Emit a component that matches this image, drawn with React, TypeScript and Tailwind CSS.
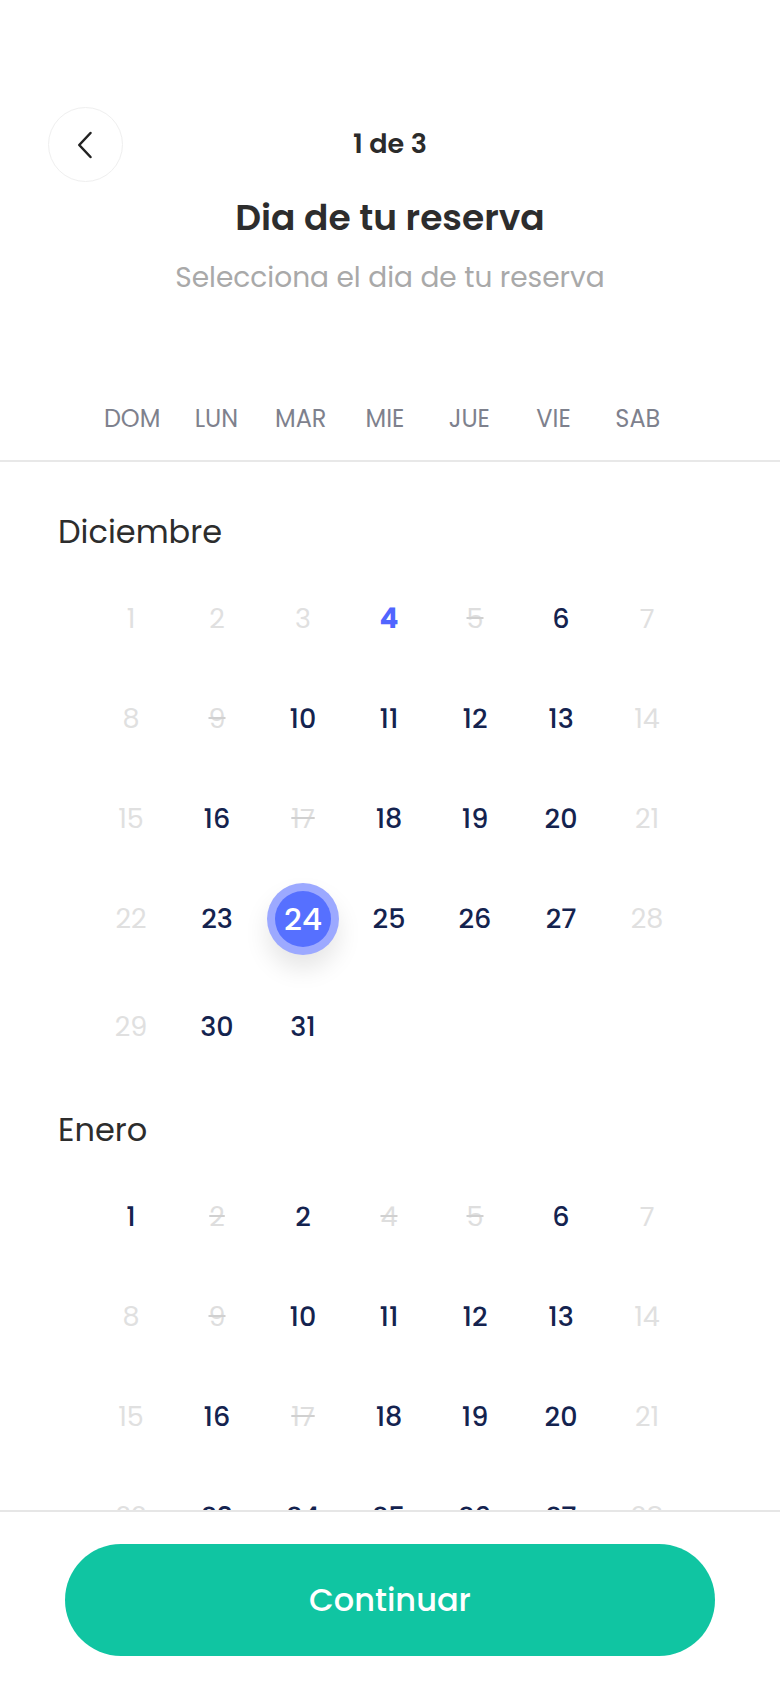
import React from "react";

type Day = { n: number | null; s: "off" | "strike" | "on" | "today" | "sel" };

const off = (n: number): Day => ({ n, s: "off" });
const st = (n: number): Day => ({ n, s: "strike" });
const on = (n: number): Day => ({ n, s: "on" });
const blank: Day = { n: null, s: "off" };

const dec: Day[][] = [
  [off(1), off(2), off(3), { n: 4, s: "today" }, st(5), on(6), off(7)],
  [off(8), st(9), on(10), on(11), on(12), on(13), off(14)],
  [off(15), on(16), st(17), on(18), on(19), on(20), off(21)],
  [off(22), on(23), { n: 24, s: "sel" }, on(25), on(26), on(27), off(28)],
  [off(29), on(30), on(31), blank, blank, blank, blank],
];

const jan: Day[][] = [
  [on(1), st(2), on(2), st(4), st(5), on(6), off(7)],
  [off(8), st(9), on(10), on(11), on(12), on(13), off(14)],
  [off(15), on(16), st(17), on(18), on(19), on(20), off(21)],
  [off(22), on(23), on(24), on(25), on(26), on(27), off(28)],
];

function Cell({ d }: { d: Day }) {
  if (d.n === null) return <div />;
  if (d.s === "sel") {
    return (
      <div className="flex items-center justify-center">
        <div className="flex h-[72px] w-[72px] items-center justify-center rounded-full bg-[#9ca9ff] shadow-[0_14px_24px_rgba(0,0,0,0.10)]">
          <div className="flex h-[56px] w-[56px] items-center justify-center rounded-full bg-[#5670ff] text-[31px] font-medium text-white">
            {d.n}
          </div>
        </div>
      </div>
    );
  }
  const cls =
    d.s === "on"
      ? "text-[#14234f] font-medium text-[27px]"
      : d.s === "today"
      ? "text-[#5065ff] font-bold text-[28px]"
      : d.s === "strike"
      ? "text-[#dedede] text-[27px] line-through decoration-[#d0d0d0]"
      : "text-[#e0e0e0] text-[27px]";
  return (
    <div className="flex items-center justify-center">
      <span className={cls}>{d.n}</span>
    </div>
  );
}

function Month({ name, rows }: { name: string; rows: Day[][] }) {
  return (
    <div>
      <div className="pl-[58px] text-[32px] leading-[44px] text-[#2d2d2d]">{name}</div>
      <div className="mt-[15px] pl-[88px] pr-[90px]">
        {rows.map((r, i) => (
          <div
            key={i}
            className={`grid h-[100px] grid-cols-7 items-center ${
              r.some((d) => d.s === "sel") ? "mb-[8px]" : ""
            }`}
          >
            {r.map((d, j) => (
              <Cell key={j} d={d} />
            ))}
          </div>
        ))}
      </div>
    </div>
  );
}

export default function App() {
  return (
    <div
      className="flex h-[1690px] w-[780px] flex-col overflow-hidden bg-white"
      style={{ fontFamily: "Poppins, Inter, 'Noto Sans', sans-serif" }}
    >
      <div className="pt-[107px]">
        <div className="grid grid-cols-[75px_1fr_75px] items-center px-[48px]">
          <button className="flex h-[75px] w-[75px] items-center justify-center rounded-full border border-[#efefef] bg-white">
            <svg width="36" height="36" viewBox="0 0 24 24" fill="none" stroke="#222" strokeWidth="1.7" strokeLinecap="round" strokeLinejoin="round">
              <path d="M15 4 L7.5 12 L15 20" />
            </svg>
          </button>
          <div className="text-center text-[27px] font-semibold text-[#2b2b2b]">1 de 3</div>
          <div />
        </div>
        <div className="mt-[14px] text-center text-[36px] font-semibold leading-[44px] text-[#2d2d2d]">
          Dia de tu reserva
        </div>
        <div className="mt-[20px] text-center text-[28px] leading-[36px] text-[#a9a9a9]">
          Selecciona el dia de tu reserva
        </div>
      </div>

      <div className="mt-[107px] grid grid-cols-7 pl-[90px] pr-[100px] text-center text-[24px] leading-[32px] text-[#7e818d]">
        {["DOM", "LUN", "MAR", "MIE", "JUE", "VIE", "SAB"].map((d) => (
          <div key={d}>{d}</div>
        ))}
      </div>
      <div className="mt-[25px] h-[2px] bg-[#e8e8e8]" />

      <div className="min-h-0 flex-1 overflow-hidden pt-[48px]">
        <Month name="Diciembre" rows={dec} />
        <div className="mt-[31px]">
          <Month name="Enero" rows={jan} />
        </div>
      </div>

      <div className="border-t-2 border-[#e6e6e6] bg-white px-[65px] pb-[34px] pt-[32px]">
        <button className="flex h-[112px] w-full items-center justify-center rounded-full bg-[#10c5a2] text-[32px] font-medium text-white">
          Continuar
        </button>
      </div>
    </div>
  );
}
